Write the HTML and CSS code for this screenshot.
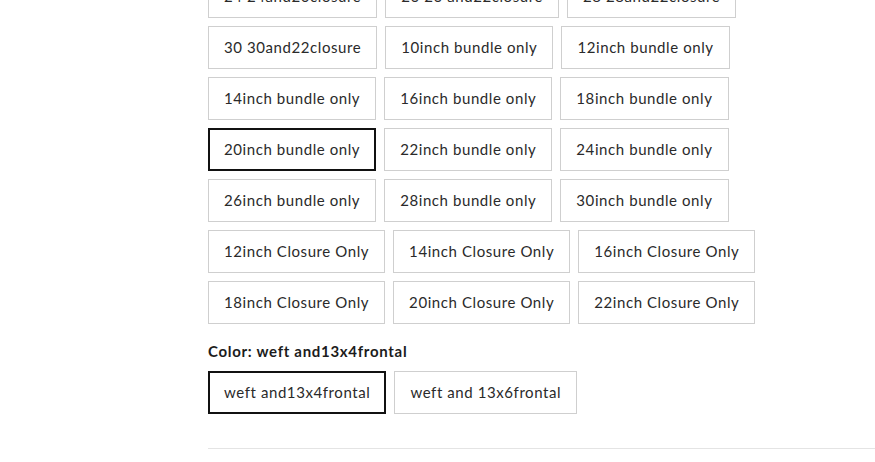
FILE: index.html
```html
<!DOCTYPE html>
<html>
<head>
<meta charset="utf-8">
<link rel="stylesheet" href="styles.css">
</head>
<body>
<div class="product-options">
  <div class="swatches">
    <button class="opt">24 24and20closure</button>
    <button class="opt">26 26 and22closure</button>
    <button class="opt">28 28and22closure</button>
    <button class="opt">30 30and22closure</button>
    <button class="opt">10inch bundle only</button>
    <button class="opt">12inch bundle only</button>
    <button class="opt">14inch bundle only</button>
    <button class="opt">16inch bundle only</button>
    <button class="opt">18inch bundle only</button>
    <button class="opt selected">20inch bundle only</button>
    <button class="opt">22inch bundle only</button>
    <button class="opt">24inch bundle only</button>
    <button class="opt">26inch bundle only</button>
    <button class="opt">28inch bundle only</button>
    <button class="opt">30inch bundle only</button>
    <button class="opt">12inch Closure Only</button>
    <button class="opt">14inch Closure Only</button>
    <button class="opt">16inch Closure Only</button>
    <button class="opt">18inch Closure Only</button>
    <button class="opt">20inch Closure Only</button>
    <button class="opt">22inch Closure Only</button>
  </div>
  <div class="label">Color: <span>weft and13x4frontal</span></div>
  <div class="swatches">
    <button class="opt selected">weft and13x4frontal</button>
    <button class="opt">weft and 13x6frontal</button>
  </div>
  <hr class="divider">
</div>
</body>
</html>
```
FILE: styles.css
```css
html, body {
  margin: 0;
  padding: 0;
  background: #fff;
  overflow: hidden;
}
body {
  font-family: Lato, "Open Sans", sans-serif;
  color: #333;
}
.product-options {
  margin-top: -25px;
  margin-left: 208px;
  width: 700px;
}
.swatches {
  display: flex;
  flex-wrap: wrap;
  gap: 8px;
  width: 560px;
}
.opt {
  box-sizing: border-box;
  height: 43px;
  padding: 0 15px 2px;
  border: 1px solid #cfcfcf;
  background: #fff;
  font-family: inherit;
  font-size: 15px;
  color: #2a2a2a;
  letter-spacing: 0.58px;
  cursor: pointer;
}
.opt.selected {
  border: 2px solid #111;
  padding: 0 14px 2px;
}
.label {
  margin-top: 17px;
  margin-bottom: 10px;
  line-height: 20px;
  font-size: 15px;
  font-weight: 700;
  letter-spacing: 0.7px;
  color: #1c1c1c;
}
.label span {
  font-weight: 700;
}
.divider {
  margin: 34px 0 0;
  border: 0;
  border-top: 1px solid #e4e4e4;
}
```
